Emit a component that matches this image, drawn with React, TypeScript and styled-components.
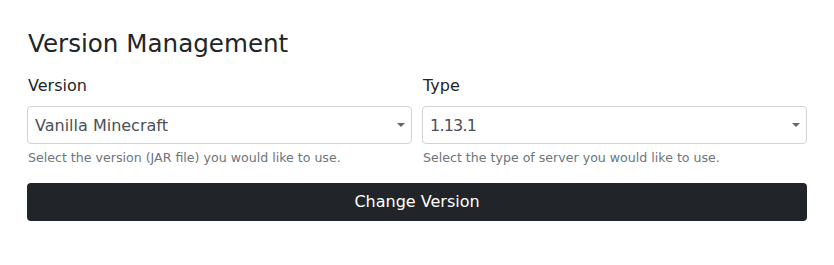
import React from "react";
import styled, { createGlobalStyle } from "styled-components";

const Global = createGlobalStyle`
  html, body { margin: 0; padding: 0; background: #fff; }
  body { font-family: "DejaVu Sans", "Open Sans", sans-serif; color: #212529; }
  * { box-sizing: border-box; }
`;

const Panel = styled.div`
  width: 834px;
  padding: 29px 27px 0 27px;
`;

const Title = styled.h2`
  margin: 0 0 15px 1px;
  font-size: 24.6px;
  font-weight: 400;
  line-height: 30px;
  color: #212529;
`;

const Row = styled.div`
  display: grid;
  grid-template-columns: 1fr 1fr;
  column-gap: 10px;
`;

const Field = styled.div`
  display: flex;
  flex-direction: column;
`;

const Label = styled.label`
  margin: 0 0 8px 1px;
  font-size: 16px;
  line-height: 24px;
  color: #212529;
`;

const SelectBox = styled.div<{ $tight?: boolean }>`
  position: relative;
  height: 38px;
  border: 1px solid #ced4da;
  border-radius: 4px;
  display: flex;
  align-items: center;
  padding: 2px 24px 0 7px;
  font-size: 16px;
  line-height: 24px;
  color: #495057;
  letter-spacing: ${(p) => (p.$tight ? "-0.8px" : "0")};
`;

const Caret = styled.span`
  position: absolute;
  right: 6px;
  top: 16px;
  width: 0;
  height: 0;
  border-left: 4px solid transparent;
  border-right: 4px solid transparent;
  border-top: 4px solid #666;
`;

const Help = styled.small`
  margin: 4px 0 0 1px;
  font-size: 12.6px;
  line-height: 19px;
  color: #6c757d;
`;

const Button = styled.button`
  display: block;
  margin-top: 16px;
  width: 100%;
  height: 38px;
  padding: 0;
  border: none;
  border-radius: 4px;
  background: #212529;
  color: #fff;
  font-family: inherit;
  font-size: 16px;
  line-height: 24px;
`;

export default function App() {
  return (
    <>
      <Global />
      <Panel>
        <Title>Version Management</Title>
        <Row>
          <Field>
            <Label>Version</Label>
            <SelectBox>
              Vanilla Minecraft
              <Caret />
            </SelectBox>
            <Help>Select the version (JAR file) you would like to use.</Help>
          </Field>
          <Field>
            <Label>Type</Label>
            <SelectBox $tight>
              1.13.1
              <Caret />
            </SelectBox>
            <Help>Select the type of server you would like to use.</Help>
          </Field>
        </Row>
        <Button>Change Version</Button>
      </Panel>
    </>
  );
}
